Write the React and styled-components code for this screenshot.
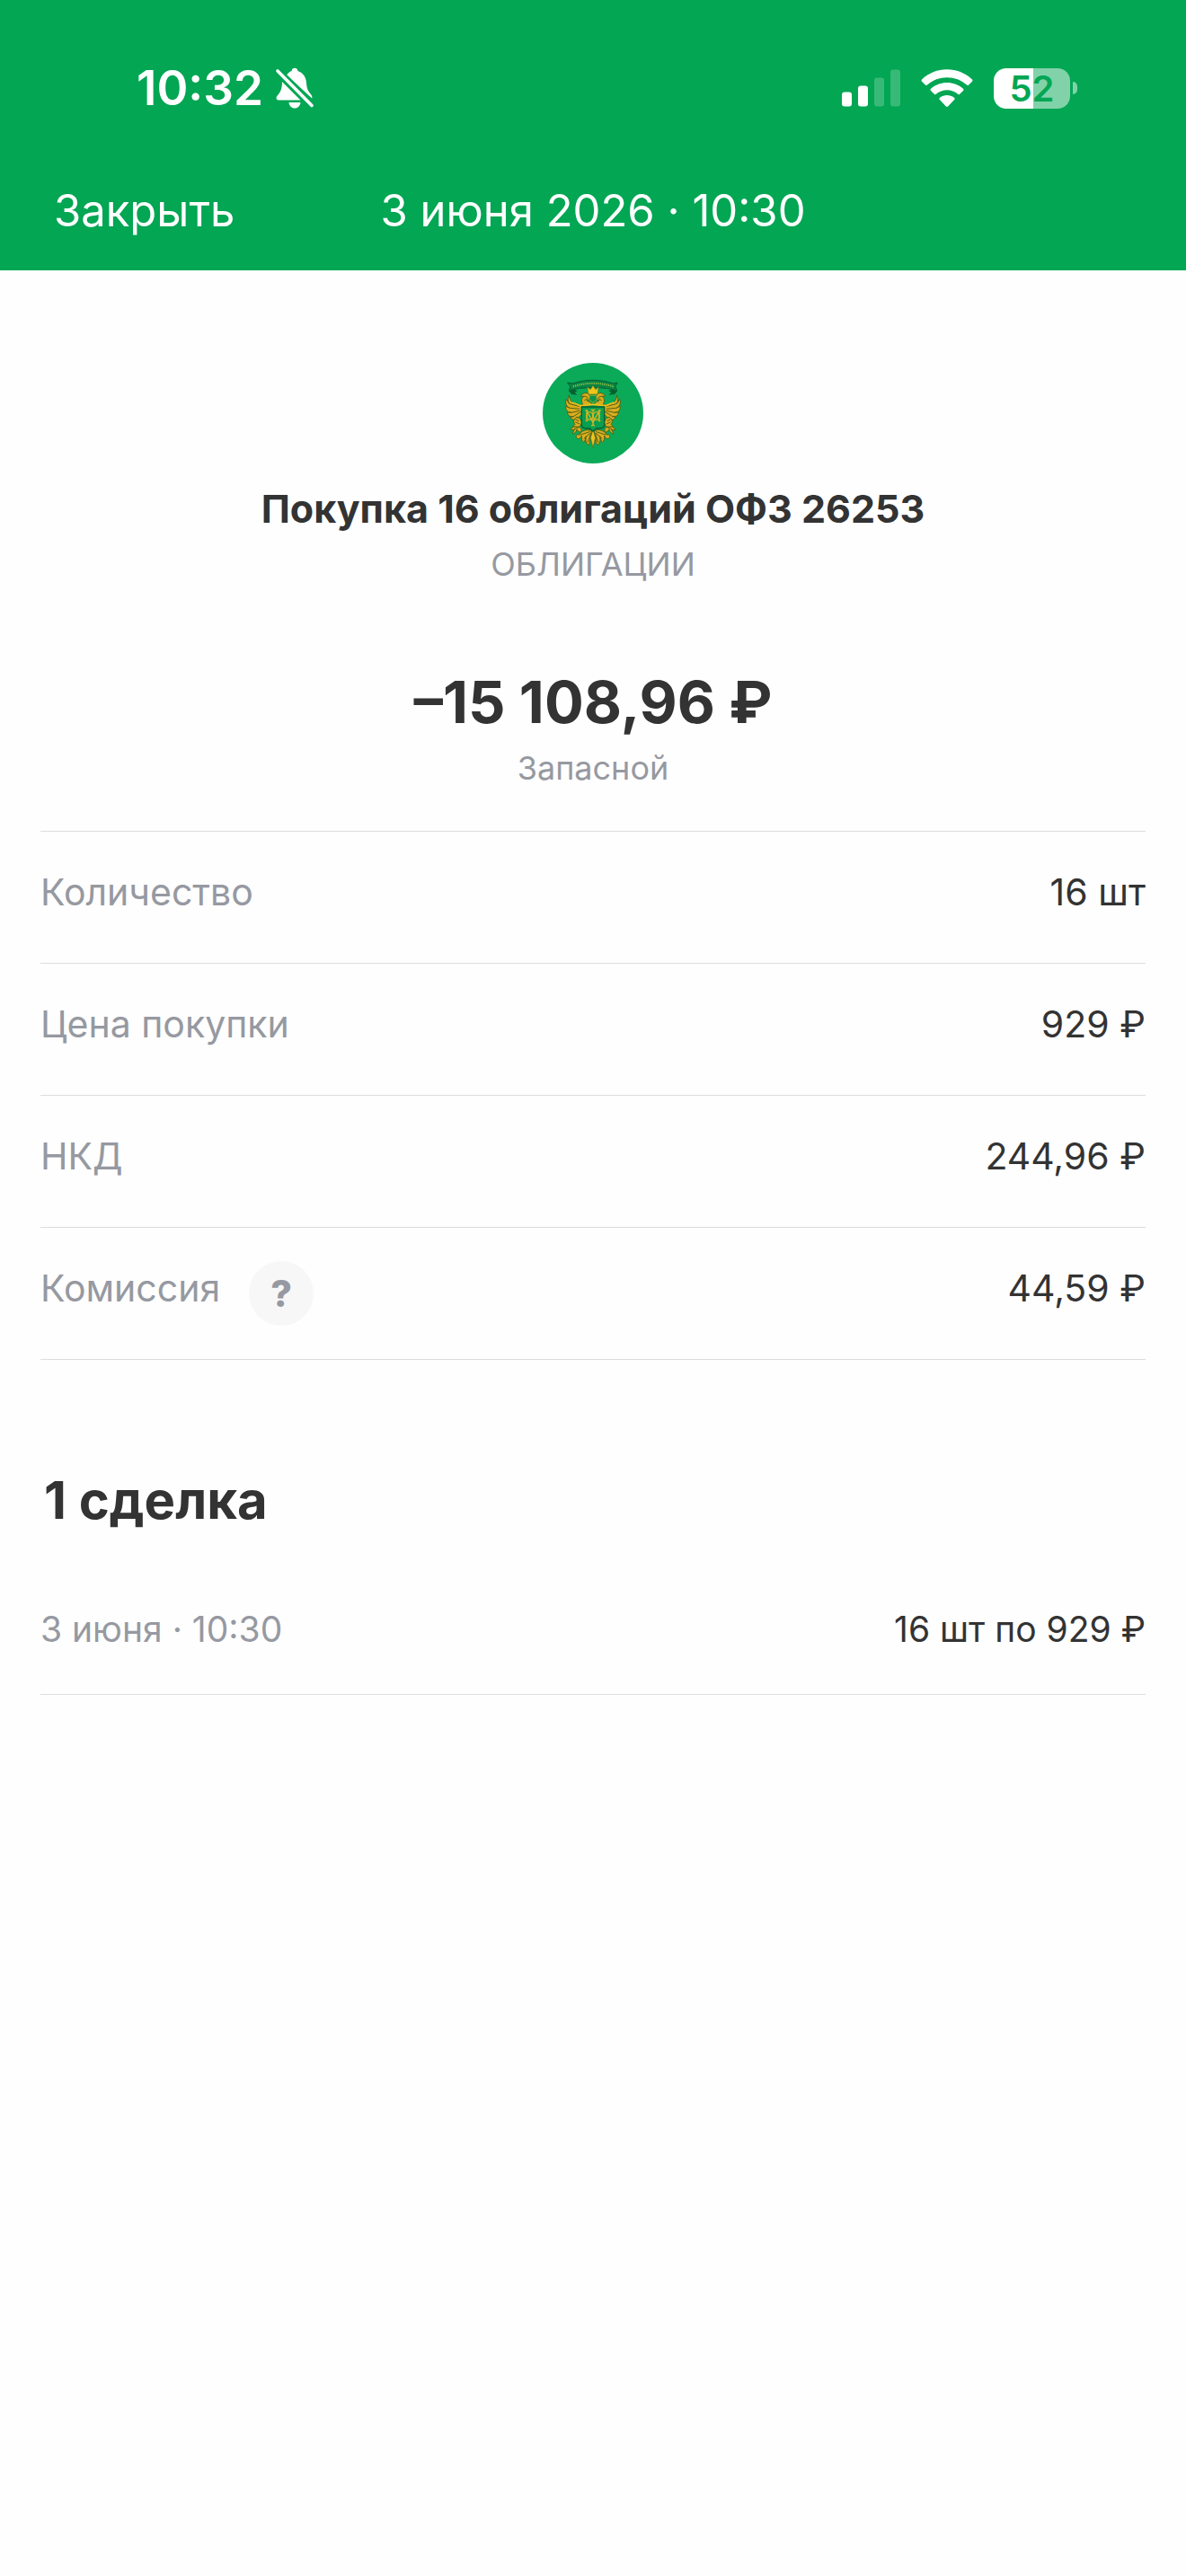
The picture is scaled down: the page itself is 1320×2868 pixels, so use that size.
import React from 'react';
import styled, { createGlobalStyle } from 'styled-components';

const GlobalStyle = createGlobalStyle`
  * {
    box-sizing: border-box;
  }
  body {
    margin: 0;
    background: #fefefe;
    color: #333333;
    font-family: Inter, "Liberation Sans", sans-serif;
  }
`;

const Header = styled.header`
  background: #02a653;
  color: #ffffff;
  padding: 66px 60px 36px;
`;

const StatusBar = styled.div`
  display: flex;
  align-items: center;
  justify-content: space-between;
  padding: 0 61px 0 92px;
`;

const StatusGroup = styled.div`
  display: flex;
  align-items: center;
  gap: ${({ $gap }) => $gap}px;
`;

const Time = styled.time`
  font-size: 53px;
  font-weight: 600;
  line-height: 64px;
`;

const Battery = styled.div`
  display: flex;
  align-items: center;
  gap: 3px;
`;

const BatteryBody = styled.div`
  width: 85px;
  height: 45px;
  border-radius: 14px;
  background: linear-gradient(to right, #ffffff 52%, #81d2a9 52%);
  color: #02a653;
  font-size: 40px;
  font-weight: 600;
  line-height: 45px;
  text-align: center;
`;

const BatteryTip = styled.div`
  width: 5px;
  height: 14px;
  border-radius: 0 5px 5px 0;
  background: #81d2a9;
`;

const NavBar = styled.nav`
  display: grid;
  grid-template-columns: 1fr auto 1fr;
  align-items: center;
  margin-top: 75px;
  font-size: 49px;
  line-height: 60px;
`;

const CloseButton = styled.button`
  justify-self: start;
  padding: 0;
  border: 0;
  background: none;
  color: inherit;
  font: inherit;
  cursor: pointer;
`;

const Content = styled.main`
  padding: 103px 45px 60px;
`;

const Summary = styled.section`
  display: flex;
  flex-direction: column;
  align-items: center;
  text-align: center;
`;

const Title = styled.h1`
  margin: 24px 0 14px;
  font-size: 43px;
  font-weight: 700;
  line-height: 52px;
`;

const Caption = styled.p`
  margin: 0;
  color: #9699a1;
  font-size: 36px;
  line-height: 44px;
`;

const Amount = styled.p`
  margin: 92px 0 11px;
  font-size: 65px;
  font-weight: 700;
  line-height: 80px;
`;

const Details = styled.dl`
  margin: 48px 0 0;
  border-bottom: 1px solid #dddddf;
`;

const DetailRow = styled.div`
  display: flex;
  justify-content: space-between;
  padding: 41px 0 53px;
  border-top: 1px solid #dddddf;
  font-size: 41px;
  line-height: 52px;
`;

const Label = styled.dt`
  display: flex;
  gap: 32px;
  color: #9699a1;
`;

const Value = styled.dd`
  margin: 0;
`;

const HelpButton = styled.button`
  width: 72px;
  height: 72px;
  margin: -4px 0 -16px;
  padding: 0;
  border: 0;
  border-radius: 50%;
  background: #f7f7f8;
  color: #9699a1;
  font: inherit;
  font-weight: 800;
  cursor: pointer;
`;

const DealsTitle = styled.h2`
  margin: 120px 0 84px;
  padding: 0 4px;
  font-size: 58px;
  font-weight: 700;
  line-height: 72px;
`;

const Deals = styled.dl`
  margin: 0;
`;

const DealRow = styled.div`
  display: flex;
  justify-content: space-between;
  padding-bottom: 48px;
  border-bottom: 1px solid #dddddf;
  font-size: 39px;
  line-height: 48px;
`;

const BellOffIcon = () => (
  <svg width="44" height="48" viewBox="0 0 44 48" fill="#fff" aria-hidden="true">
    <path d="M13 9.5C15 6.800 17 5.600 18.500 5 19 3 20 1.800 22 1.800S25 3 25.500 5C31.500 7 34.500 12 35 18C35.400 24 36.500 27 40 31C41.200 32.500 41.700 34 41.200 35.500Z" />
    <path d="M8 17L28.500 37.500H4C1.500 37.500 .8 35 2.500 32.800C6 29 8 25 8 17Z" />
    <path d="M15.500 40H28.500C28 44 25.500 46.500 22 46.500S16 44 15.500 40Z" />
    <path d="M2 3.500L42 44" stroke="#02a653" strokeWidth="8" />
    <path d="M3 5L41 43.500" stroke="#fff" strokeWidth="3.600" strokeLinecap="round" />
  </svg>
);

const SignalIcon = () => (
  <svg width="65" height="42" viewBox="0 0 65 42" fill="#fff" aria-hidden="true">
    <rect x="0" y="25.500" width="11" height="16" rx="3" />
    <rect x="18" y="18.500" width="11" height="23" rx="3" />
    <rect x="36" y="9.500" width="11" height="32" rx="3" opacity=".22" />
    <rect x="54" y="0.500" width="11" height="41" rx="3" opacity=".22" />
  </svg>
);

const WifiIcon = () => (
  <svg width="58" height="43" viewBox="0 0 58 43" fill="#fff" aria-hidden="true">
    <path d="M1 11.500C16.500-3.500 41.500-3.500 57 11.500C57.700 12.200 57.700 13 57 13.700L53.200 17.500C52.500 18.200 51.700 18.200 51 17.500C38.800 6.400 19.200 6.400 7 17.500C6.300 18.200 5.500 18.200 4.800 17.500L1 13.700C.3 13 .3 12.200 1 11.500Z" />
    <path d="M11 21.800C21 12.700 37 12.700 47 21.800C47.700 22.500 47.700 23.200 47 23.900L43.200 27.700C42.500 28.400 41.800 28.400 41.100 27.800C34.400 21.800 23.600 21.800 16.900 27.800C16.200 28.400 15.500 28.400 14.800 27.700L11 23.900C10.300 23.200 10.300 22.500 11 21.800Z" />
    <path d="M21 31.800C25.500 28 32.500 28 37 31.800C37.800 32.500 37.800 33.300 37.100 34L30.300 41.200C29.400 42.100 28.600 42.100 27.700 41.200L20.900 34C20.200 33.300 20.200 32.500 21 31.800Z" />
  </svg>
);

// Left half of the eagle, mirrored to get the right one
const EagleHalf = () => (
  <g strokeLinejoin="round" strokeLinecap="round">
    <path d="M87 94L103 88L116 93L107 99L116 107L96 105Z" fill="#07612f" />
    <g fill="#d9ae1c" stroke="#55611a" strokeWidth="3">
      <path d="M88 109C83 117 83 128 90 137L78 122C74 136 81 148 91 151L77 145C76 158 84 166 96 166L82 165C84 176 92 181 102 179L91 182C97 190 106 192 114 187L134 169V142L105 137C95 130 89 121 88 109Z" />
      <path d="M133 136C128 127 130 116 138 112L127 111C133 101 147 97 154 105C161 113 158 124 147 126C156 129 162 133 164 140L134 142Z" />
      <path d="M114 182C104 187 100 197 108 205L100 213C110 214 119 216 126 211L132 198C126 195 129 184 114 182Z" />
      <path d="M103 214L92 222C97 225 101 225 106 222L99 237C106 237 112 231 114 223L123 232C131 228 132 219 122 215Z" />
      <path d="M153 224C139 223 127 230 122 241C116 237 110 242 113 250C119 257 128 251 130 243C129 254 131 261 137 265C142 261 143 252 145 245C142 259 145 271 153 274C160 270 158 254 159 245L164 227Z" />
    </g>
    <g fill="none" stroke="#57601a" strokeWidth="3">
      <path d="M91 137L121 145M93 151L122 154M96 166L123 160M103 179L128 163" />
      <path d="M139 111L149 115M140 125L151 119M110 198L123 204M111 190L120 194M106 221L117 218" />
      <path d="M157 230L127 240M158 235L138 253M160 238L151 265" />
    </g>
    <path d="M99 133L127 143L167 139" fill="none" stroke="#efc51c" strokeWidth="5" />
  </g>
);

const Emblem = () => (
  <svg width="112" height="112" viewBox="0 0 336 336" aria-hidden="true">
    <circle cx="168" cy="168" r="168" fill="#0aaa58" />
    <path
      d="M83 66L100 69C145 54 191 54 236 69L249 66L243 79L248 94C220 79 116 79 88 94L92 79Z"
      fill="#078546"
      stroke="#075e31"
      strokeWidth="3"
    />
    <path d="M101 79C144 65 192 65 236 79" fill="none" stroke="#8fb83a" strokeWidth="6" strokeDasharray="4 3" />
    <EagleHalf />
    <g transform="translate(336 0) scale(-1 1)">
      <EagleHalf />
    </g>
    <path d="M149 80L159 89L168 76L177 89L187 80L183 105H153Z" fill="#efc51c" stroke="#6b7117" strokeWidth="2" />
    <path d="M156 109H180V118C180 125 174 129 168 132C162 129 156 125 156 118Z" fill="#0a934b" stroke="#c1a51e" strokeWidth="2" />
    <path d="M168 222L176 250L168 284L160 250Z" fill="#efc51c" stroke="#57601a" strokeWidth="2" />
    <path
      d="M130 147H206V207C206 216 199 219 191 219H180L168 228L156 219H145C137 219 130 216 130 207Z"
      fill="#099f50"
      stroke="#075f30"
      strokeWidth="4"
    />
    <g fill="none" stroke="#d8b524" strokeWidth="4">
      <path d="M143 194H151M147 194V160L168 199L189 160V194M185 194H193M142 159H151M185 159H194" />
      <path d="M168 157V209M161 157H175M162 209H174" />
      <ellipse cx="157" cy="177" rx="10" ry="13" />
      <ellipse cx="179" cy="177" rx="10" ry="13" />
    </g>
  </svg>
);

const details = [
  { label: 'Количество', value: '16 шт' },
  { label: 'Цена покупки', value: '929 ₽' },
  { label: 'НКД', value: '244,96 ₽' },
  { label: 'Комиссия', value: '44,59 ₽', help: true },
];

const deals = [{ date: '3 июня · 10:30', value: '16 шт по 929 ₽' }];

const App = () => {
  return (
    <>
      <GlobalStyle />
      <Header>
        <StatusBar>
          <StatusGroup $gap={13}>
            <Time>10:32</Time>
            <BellOffIcon />
          </StatusGroup>
          <StatusGroup $gap={23}>
            <SignalIcon />
            <WifiIcon />
            <Battery>
              <BatteryBody>52</BatteryBody>
              <BatteryTip />
            </Battery>
          </StatusGroup>
        </StatusBar>
        <NavBar>
          <CloseButton type="button">Закрыть</CloseButton>
          <span>3 июня 2026 · 10:30</span>
        </NavBar>
      </Header>
      <Content>
        <Summary>
          <Emblem />
          <Title>Покупка 16 облигаций ОФЗ 26253</Title>
          <Caption>ОБЛИГАЦИИ</Caption>
          <Amount>–15 108,96 ₽</Amount>
          <Caption>Запасной</Caption>
        </Summary>
        <Details>
          {details.map(({ label, value, help }) => (
            <DetailRow key={label}>
              <Label>
                {label}
                {help && <HelpButton type="button">?</HelpButton>}
              </Label>
              <Value>{value}</Value>
            </DetailRow>
          ))}
        </Details>
        <DealsTitle>1 сделка</DealsTitle>
        <Deals>
          {deals.map(({ date, value }) => (
            <DealRow key={date}>
              <Label>{date}</Label>
              <Value>{value}</Value>
            </DealRow>
          ))}
        </Deals>
      </Content>
    </>
  );
};

export default App;
